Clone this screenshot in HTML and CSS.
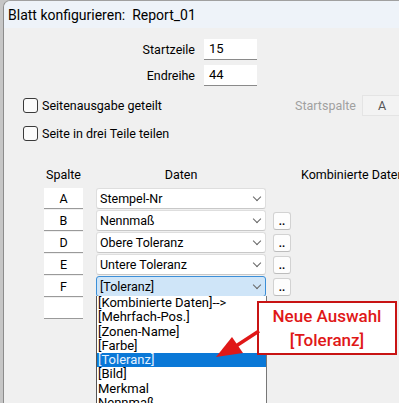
FILE: index.html
```html
<!DOCTYPE html>
<html lang="de">
<head>
    <meta charset="UTF-8">
    <meta name="viewport" content="width=device-width, initial-scale=1.0">
    <title>Blatt konfigurieren</title>
    <link rel="stylesheet" href="styles.css">
</head>
<body>
    <div class="window">
        <div class="titlebar">Blatt konfigurieren:&nbsp; Report_01</div>

        <div class="content">
            <div class="range">
                <label>Startzeile</label><div class="field">15</div>
                <label>Endreihe</label><div class="field">44</div>
            </div>

            <div class="options">
                <div class="opt"><span class="check"></span>Seitenausgabe geteilt</div>
                <div class="startspalte">
                    <span class="muted">Startspalte</span>
                    <span class="disabled-box">A</span>
                </div>
                <div class="opt"><span class="check"></span>Seite in drei Teile teilen</div>
            </div>

            <div class="table">
                <div class="th col-a">Spalte</div>
                <div class="th col-b">Daten</div>
                <div></div>
                <div class="th th-left">Kombinierte Daten</div>

                <div class="cell">A</div>
                <div class="combo">Stempel-Nr<span class="chev"></span></div>
                <div></div><div></div>

                <div class="cell">B</div>
                <div class="combo">Nennmaß<span class="chev"></span></div>
                <div class="btn">..</div><div></div>

                <div class="cell">D</div>
                <div class="combo">Obere Toleranz<span class="chev"></span></div>
                <div class="btn">..</div><div></div>

                <div class="cell">E</div>
                <div class="combo">Untere Toleranz<span class="chev"></span></div>
                <div class="btn">..</div><div></div>

                <div class="cell">F</div>
                <div class="combo focus">[Toleranz]<span class="chev"></span></div>
                <div class="btn">..</div><div></div>

                <div class="cell"></div>
                <div></div><div></div><div></div>
            </div>
        </div>
    </div>

    <ul class="dropdown">
        <li>[Kombinierte Daten]--&gt;</li>
        <li>[Mehrfach-Pos.]</li>
        <li>[Zonen-Name]</li>
        <li>[Farbe]</li>
        <li class="selected">[Toleranz]</li>
        <li>[Bild]</li>
        <li>Merkmal</li>
        <li>Nennmaß</li>
    </ul>

    <div class="callout">Neue Auswahl<br>[Toleranz]</div>

    <svg class="arrow" width="399" height="403" viewBox="0 0 399 403">
        <line x1="259" y1="331" x2="236" y2="346" stroke="#e01818" stroke-width="3.5"/>
        <polygon points="216,357 232,337 243,353" fill="#e01818"/>
    </svg>
</body>
</html>
```

FILE: styles.css
```css
body { margin: 0; background: #c6c6c6; font-family: Roboto, "Liberation Sans", sans-serif; font-size: 12.5px; color: #000; overflow: hidden; width: 399px; height: 403px; }
.window { margin-left: 3px; width: 460px; height: 420px; background: #f0f0f0; border-left: 1px solid #8c8c8c; border-top: 1px solid #a0a0a0; border-top-left-radius: 7px; }
.titlebar { height: 27px; line-height: 29px; padding-left: 4px; background: #eef3f9; font-size: 14px; border-top-left-radius: 7px; }
.content { padding-top: 11px; }

.range { display: grid; grid-template-columns: 191px 53px; column-gap: 9px; row-gap: 5px; }
.range label { text-align: right; line-height: 21px; }
.field { height: 20px; line-height: 20px; background: #fff; border-bottom: 1px solid #8a8a8a; padding-left: 5px; font-size: 13px; }

.options { display: grid; grid-template-columns: 272px auto; row-gap: 8px; margin-top: 9px; padding-left: 19px; }
.opt { display: flex; align-items: center; height: 20px; }
.check { width: 13px; height: 13px; border: 1px solid #3a3a3a; border-radius: 3px; background: #fbfbfb; margin-right: 4px; }
.startspalte { display: flex; align-items: center; height: 20px; }
.muted { color: #a0a0a0; width: 67px; }
.disabled-box { width: 38px; height: 19px; line-height: 19px; text-align: center; color: #555; border: 1px solid #e4e4e4; background: #f3f3f3; }

.table { display: grid; grid-template-columns: 52px 177px 28px auto; grid-template-rows: 21px; grid-auto-rows: 21px; row-gap: 1px; margin-top: 23px; margin-left: 40px; }
.th { height: 20px; line-height: 18px; text-align: center; white-space: nowrap; }
.col-a { width: 39px; }
.col-b { width: 170px; }
.th-left { text-align: left; }
.cell { width: 39px; background: #fff; border-bottom: 1px solid #9a9a9a; text-align: center; line-height: 21px; height: 20px; }
.combo { position: relative; box-sizing: border-box; width: 170px; height: 21px; line-height: 19px; padding-left: 3px; background: #fff; border: 1px solid #dedede; border-bottom-color: #c8c8c8; border-radius: 3px; }
.combo.focus { background: #cfe5f8; border-color: #3c8fd8; }
.chev { position: absolute; right: 5px; top: 5px; width: 5px; height: 5px; border-right: 1px solid #666; border-bottom: 1px solid #666; transform: rotate(45deg); }
.btn { box-sizing: border-box; width: 18px; height: 18px; margin-top: 2px; background: #fdfdfd; border: 1px solid #d2d2d2; border-bottom-color: #bcbcbc; border-radius: 3px; text-align: center; font-size: 11px; line-height: 17px; font-weight: bold; }

.dropdown { position: absolute; left: 96px; top: 296px; width: 169px; height: 120px; margin: 0; padding: 0; list-style: none; background: #fff; border-left: 1px solid #555; border-right: 1px solid #777; font-size: 13px; }
.dropdown li { height: 14.3px; line-height: 14.3px; padding-left: 1px; white-space: nowrap; }
.dropdown .selected { background: #0a78d7; color: #e4f1ff; }

.callout { position: absolute; left: 257px; top: 301px; width: 136px; height: 49px; border: 2px solid #c81414; background: #fff; color: #e01818; text-align: center; font-size: 17px; font-weight: 500; line-height: 24px; padding-top: 1px; }
.arrow { position: absolute; left: 0; top: 0; pointer-events: none; }
```
